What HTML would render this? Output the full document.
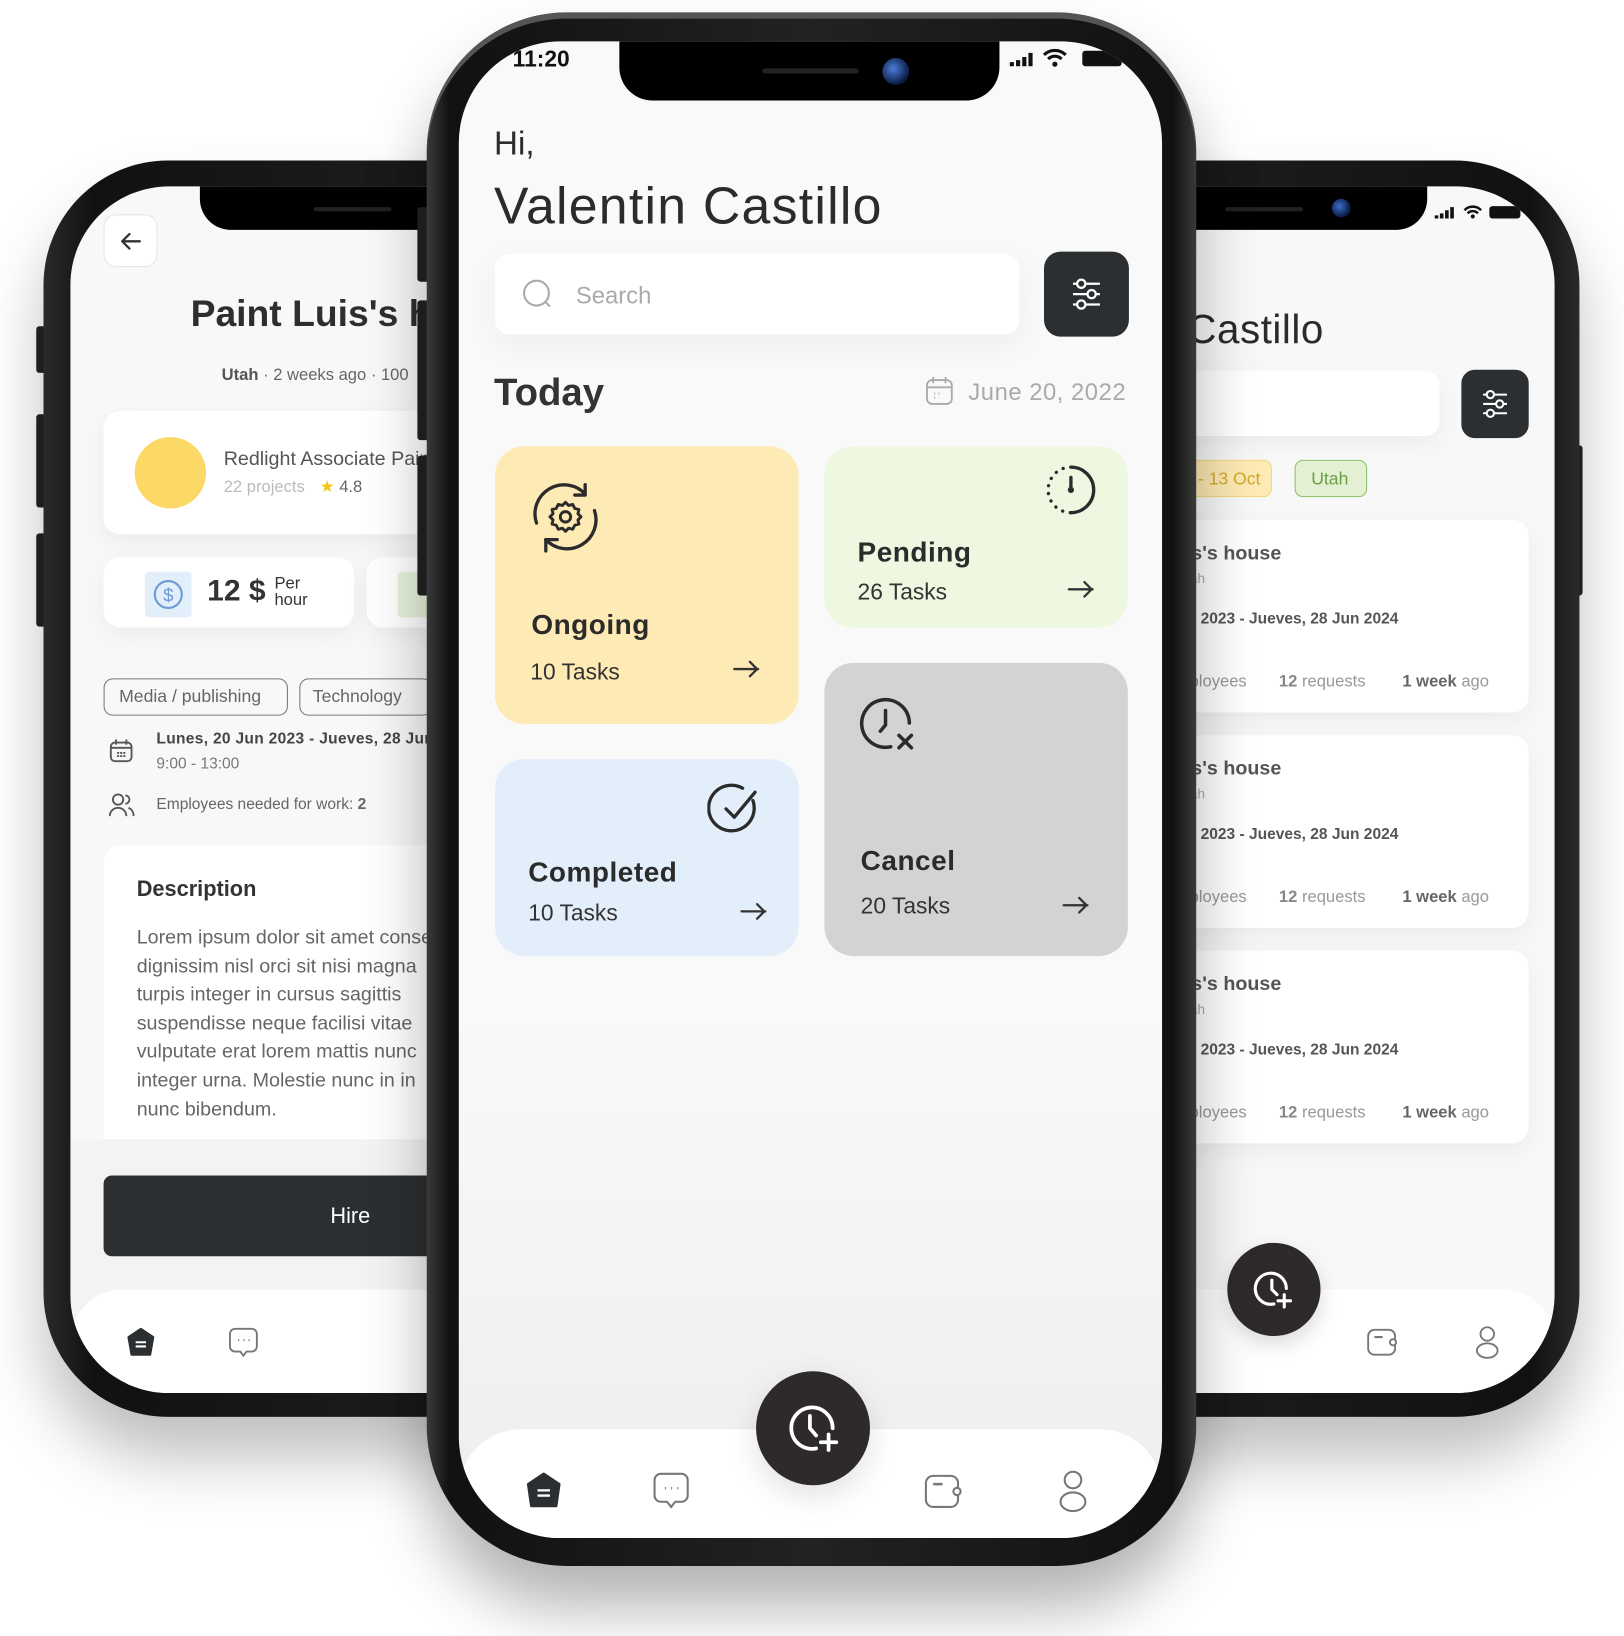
<!DOCTYPE html>
<html><head><meta charset="utf-8">
<style>
*{margin:0;padding:0;box-sizing:border-box}
html,body{width:1624px;height:1636px;overflow:hidden;background:#fff}
body{font-family:"Liberation Sans",sans-serif;color:#2b2b2b}
#w{position:absolute;left:0;top:0;width:1568px;height:1580px;transform:scale(1.0357);transform-origin:0 0}
.a{position:absolute}
.frame{position:absolute;background:linear-gradient(90deg,#2a2a2a,#111 8%,#1a1a1a 50%,#111 92%,#2a2a2a);box-shadow:0 40px 60px rgba(0,0,0,.25)}
.screen{position:absolute;overflow:hidden;background:#f8f8f8}
.t{position:absolute;white-space:nowrap}
.card{position:absolute;background:#fff;border-radius:16px;box-shadow:0 8px 24px rgba(0,0,0,.05)}
.btn{position:absolute;background:#2c2f31;border-radius:16px}
</style></head><body><div id="w">

<!-- LEFT PHONE -->
<div class="a" style="left:35px;top:315px;width:10px;height:45px;background:#222;border-radius:3px"></div>
<div class="a" style="left:35px;top:400px;width:10px;height:90px;background:#222;border-radius:3px"></div>
<div class="a" style="left:35px;top:515px;width:10px;height:90px;background:#222;border-radius:3px"></div>
<div class="frame" style="left:42px;top:155px;width:600px;height:1213px;border-radius:120px"></div>
<div class="screen" style="left:68px;top:180px;width:560px;height:1165px;border-radius:95px">
  <div class="a" style="left:125px;top:0;width:300px;height:42px;background:#000;border-radius:0 0 30px 30px"></div>
  <div class="a" style="left:235px;top:20px;width:75px;height:4px;background:#222;border-radius:2px"></div>
  <div class="card" style="left:32px;top:27px;width:52px;height:51px;border-radius:12px;border:1px solid #e5e5e5;box-shadow:none">
    <svg width="50" height="50" viewBox="0 0 50 50"><path d="M34 25H17M24 18l-7 7 7 7" fill="none" stroke="#333" stroke-width="2.2" stroke-linecap="round" stroke-linejoin="round"/></svg></div>
  <div class="t" style="left:116px;top:102px;font-size:36px;font-weight:bold;color:#2e2e2e">Paint Luis's house</div>
  <div class="t" style="left:146px;top:174px;font-size:16px;color:#666"><b style="color:#555">Utah</b> · 2 weeks ago · 100</div>
  <div class="card" style="left:32px;top:217px;width:520px;height:119px">
    <div class="a" style="left:30px;top:25px;width:69px;height:69px;border-radius:50%;background:#fcd966"></div>
    <div class="t" style="left:116px;top:36px;font-size:19px;color:#555">Redlight Associate Painters</div>
    <div class="t" style="left:116px;top:63px;font-size:16px;color:#bbb">22 projects <span style="color:#f5c518;margin-left:10px">★</span> <span style="color:#666">4.8</span></div>
  </div>
  <div class="card" style="left:32px;top:358px;width:242px;height:68px">
    <div class="a" style="left:40px;top:14px;width:45px;height:44px;background:#e3eefb;border-radius:4px">
      <svg width="45" height="44" viewBox="0 0 45 44"><circle cx="22.5" cy="22" r="13" fill="none" stroke="#6b9bd1" stroke-width="2"/><text x="22.5" y="29" font-size="18" text-anchor="middle" fill="#6b9bd1" font-family="Liberation Sans">$</text></svg></div>
    <div class="t" style="left:100px;top:17px;font-size:29px;font-weight:bold;color:#333">12 $</div>
    <div class="t" style="left:165px;top:18px;font-size:16px;line-height:16px;color:#333">Per<br>hour</div>
  </div>
  <div class="card" style="left:286px;top:358px;width:242px;height:68px">
    <div class="a" style="left:30px;top:14px;width:45px;height:44px;background:#e6f2da;border-radius:4px"></div></div>
  <div class="a" style="left:32px;top:475px;width:178px;height:36px;border:1.5px solid #777;border-radius:9px"></div>
  <div class="t" style="left:47px;top:483px;font-size:17px;color:#666">Media / publishing</div>
  <div class="a" style="left:221px;top:475px;width:128px;height:36px;border:1.5px solid #777;border-radius:9px"></div>
  <div class="t" style="left:234px;top:483px;font-size:17px;color:#666">Technology</div>
  <svg class="a" style="left:36px;top:532px" width="26" height="26" viewBox="0 0 26 26"><rect x="3" y="5" width="20" height="18" rx="4" fill="none" stroke="#555" stroke-width="1.8"/><path d="M8 2v5M18 2v5M3 10h20" stroke="#555" stroke-width="1.8"/><path d="M9 15h2M12 15h2M15 15h2M9 18h2M12 18h2M15 18h2" stroke="#555" stroke-width="1.8"/></svg>
  <div class="t" style="left:83px;top:525px;font-size:15px;font-weight:bold;color:#444;letter-spacing:.3px">Lunes, 20 Jun 2023 - Jueves, 28 Jun 2024</div>
  <div class="t" style="left:83px;top:549px;font-size:15px;color:#777">9:00 - 13:00</div>
  <svg class="a" style="left:36px;top:584px" width="26" height="26" viewBox="0 0 26 26"><circle cx="10" cy="8" r="5" fill="none" stroke="#555" stroke-width="1.8"/><path d="M2 24c0-5 4-8 8-8s8 3 8 8M17 4a4 4 0 0 1 0 8M20 16c3 1 5 4 5 8" fill="none" stroke="#555" stroke-width="1.8"/></svg>
  <div class="t" style="left:83px;top:588px;font-size:15px;color:#666">Employees needed for work: <b>2</b></div>
  <div class="a" style="left:32px;top:636px;width:520px;height:300px;background:#fff;border-radius:16px"></div>
  <div class="t" style="left:64px;top:667px;font-size:21px;font-weight:bold;color:#333">Description</div>
  <div class="t" style="left:64px;top:712px;font-size:19px;line-height:27.6px;color:#666">Lorem ipsum dolor sit amet consectetur<br>dignissim nisl orci sit nisi magna<br>turpis integer in cursus sagittis<br>suspendisse neque facilisi vitae<br>vulputate erat lorem mattis nunc<br>integer urna. Molestie nunc in in<br>nunc bibendum.</div>
  <div class="a" style="left:0;top:920px;width:560px;height:250px;background:#f3f3f3"></div>
  <div class="btn" style="left:32px;top:955px;width:484px;height:78px;border-radius:8px"></div>
  <div class="t" style="left:251px;top:983px;font-size:21px;color:#fff">Hire</div>
  <div class="a" style="left:0;top:1065px;width:560px;height:110px;background:#fff;border-radius:50px 50px 0 0"></div>
  <svg class="a" style="left:52px;top:1100px" width="32" height="32" viewBox="0 0 32 32"><path d="M16 3l12 8-3 17H7L4 11z" fill="#2c2f31" stroke="#2c2f31" stroke-width="2" stroke-linejoin="round"/><path d="M11 16h10M11 20h10" stroke="#fff" stroke-width="2"/></svg>
  <svg class="a" style="left:151px;top:1100px" width="32" height="34" viewBox="0 0 32 34"><path d="M8 3h16a5 5 0 0 1 5 5v12a5 5 0 0 1-5 5h-5l-3 4-3-4H8a5 5 0 0 1-5-5V8a5 5 0 0 1 5-5z" fill="none" stroke="#777" stroke-width="1.8"/><path d="M11 14h1M16 14h1M21 14h1" stroke="#777" stroke-width="2"/></svg>
</div>
<div class="a" style="left:403px;top:200px;width:12px;height:72px;background:#222;border-radius:3px"></div>
<div class="a" style="left:403px;top:290px;width:12px;height:135px;background:#222;border-radius:3px"></div>
<div class="a" style="left:403px;top:440px;width:12px;height:135px;background:#222;border-radius:3px"></div>

<!-- RIGHT PHONE -->
<div class="a" style="left:1518px;top:430px;width:10px;height:145px;background:#222;border-radius:3px"></div>
<div class="frame" style="left:928px;top:155px;width:597px;height:1213px;border-radius:120px"></div>
<div class="screen" style="left:953px;top:180px;width:548px;height:1165px;border-radius:95px">
  <div class="a" style="left:140px;top:0;width:285px;height:42px;background:#000;border-radius:0 0 30px 30px"></div>
  <div class="a" style="left:230px;top:20px;width:75px;height:4px;background:#222;border-radius:2px"></div>
  <div class="a" style="left:333px;top:12px;width:18px;height:18px;border-radius:50%;background:radial-gradient(circle at 40% 40%,#3a6cc8,#0a1a40 70%)"></div>
  <svg class="a" style="left:432px;top:15px" width="95" height="18" viewBox="0 0 95 18"><path d="M2 16v-3M7 16v-5M12 16v-8M17 16v-11" stroke="#111" stroke-width="3.5"/><path d="M29 8a11 11 0 0 1 16 0M32 11a7 7 0 0 1 10 0" fill="none" stroke="#111" stroke-width="2.4"/><circle cx="37" cy="14" r="2" fill="#111"/><rect x="53" y="4" width="30" height="12" rx="3" fill="#111"/></svg>
  <div class="t" style="left:40px;top:117px;font-size:39px;color:#2b2b2b;letter-spacing:.5px">Valentin Castillo</div>
  <div class="card" style="left:32px;top:178px;width:405px;height:63px;border-radius:14px"></div>
  <div class="btn" style="left:458px;top:177px;width:65px;height:66px;border-radius:13px">
    <svg width="65" height="66" viewBox="0 0 65 66"><path d="M21 24h23M21 33h23M21 42h23" stroke="#fff" stroke-width="2"/><circle cx="28" cy="24" r="3.5" fill="#2c2f31" stroke="#fff" stroke-width="2"/><circle cx="37" cy="33" r="3.5" fill="#2c2f31" stroke="#fff" stroke-width="2"/><circle cx="28" cy="42" r="3.5" fill="#2c2f31" stroke="#fff" stroke-width="2"/></svg></div>
  <div class="a" style="left:130px;top:264px;width:145px;height:36px;background:#fdeab4;border:1.5px solid #f2d57a;border-radius:8px"></div>
  <div class="t" style="left:150px;top:273px;font-size:17px;color:#d0a92a;width:114px;text-align:right">11 - 13 Oct</div>
  <div class="a" style="left:297px;top:264px;width:70px;height:36px;background:#e3f0d4;border:1.5px solid #8cc063;border-radius:8px"></div>
  <div class="t" style="left:313px;top:273px;font-size:17px;color:#6a9f43">Utah</div>
  <div class="card" style="left:32px;top:322px;width:491px;height:186px"></div>
  <div class="card" style="left:32px;top:530px;width:491px;height:186px"></div>
  <div class="card" style="left:32px;top:738px;width:491px;height:186px"></div>
  <div class="t" style="left:117px;top:344px;font-size:19px;font-weight:bold;color:#555">Paint Luis's house</div>
  <div class="t" style="left:183px;top:371px;font-size:13px;color:#aaa">Utah</div>
  <div class="t" style="left:102px;top:409px;font-size:15px;font-weight:bold;color:#555">Lunes, 20 Jun 2023 - Jueves, 28 Jun 2024</div>
  <div class="t" style="left:160px;top:470px;font-size:16px;color:#999">2 employees &nbsp;&nbsp;&nbsp;&nbsp;&nbsp;&nbsp;<b style="color:#888">12</b> requests &nbsp;&nbsp;&nbsp;&nbsp;&nbsp;&nbsp;&nbsp;<b style="color:#666">1 week</b> ago</div>
  <div class="t" style="left:117px;top:552px;font-size:19px;font-weight:bold;color:#555">Paint Luis's house</div>
  <div class="t" style="left:183px;top:579px;font-size:13px;color:#aaa">Utah</div>
  <div class="t" style="left:102px;top:617px;font-size:15px;font-weight:bold;color:#555">Lunes, 20 Jun 2023 - Jueves, 28 Jun 2024</div>
  <div class="t" style="left:160px;top:678px;font-size:16px;color:#999">2 employees &nbsp;&nbsp;&nbsp;&nbsp;&nbsp;&nbsp;<b style="color:#888">12</b> requests &nbsp;&nbsp;&nbsp;&nbsp;&nbsp;&nbsp;&nbsp;<b style="color:#666">1 week</b> ago</div>
  <div class="t" style="left:117px;top:760px;font-size:19px;font-weight:bold;color:#555">Paint Luis's house</div>
  <div class="t" style="left:183px;top:787px;font-size:13px;color:#aaa">Utah</div>
  <div class="t" style="left:102px;top:825px;font-size:15px;font-weight:bold;color:#555">Lunes, 20 Jun 2023 - Jueves, 28 Jun 2024</div>
  <div class="t" style="left:160px;top:886px;font-size:16px;color:#999">2 employees &nbsp;&nbsp;&nbsp;&nbsp;&nbsp;&nbsp;<b style="color:#888">12</b> requests &nbsp;&nbsp;&nbsp;&nbsp;&nbsp;&nbsp;&nbsp;<b style="color:#666">1 week</b> ago</div>
  <div class="a" style="left:0;top:1065px;width:548px;height:110px;background:#fff;border-radius:50px 50px 0 0"></div>
  <div class="a" style="left:232px;top:1020px;width:90px;height:90px;border-radius:50%;background:#2e2a2a;box-shadow:0 8px 20px rgba(0,0,0,.15)">
    <svg width="90" height="90" viewBox="0 0 90 90"><path d="M57 44a15 15 0 1 0-12 15" fill="none" stroke="#fff" stroke-width="3" stroke-linecap="round"/><path d="M43 36v9l5 5" fill="none" stroke="#fff" stroke-width="3" stroke-linecap="round"/><path d="M55 50v12M49 56h12" stroke="#fff" stroke-width="3" stroke-linecap="round"/></svg></div>
  <svg class="a" style="left:365px;top:1100px" width="34" height="32" viewBox="0 0 34 32"><rect x="3" y="4" width="26" height="24" rx="6" fill="none" stroke="#777" stroke-width="1.8"/><path d="M9 11h8" stroke="#777" stroke-width="2"/><circle cx="27" cy="16" r="3" fill="#fff" stroke="#777" stroke-width="1.8"/></svg>
  <svg class="a" style="left:468px;top:1098px" width="30" height="36" viewBox="0 0 30 36"><circle cx="15" cy="10" r="6.5" fill="none" stroke="#777" stroke-width="1.8"/><ellipse cx="15" cy="26" rx="10" ry="7" fill="none" stroke="#777" stroke-width="1.8"/></svg>
</div>

<!-- CENTER PHONE -->
<div class="frame" style="left:412px;top:12px;width:743px;height:1500px;border-radius:135px;background:linear-gradient(90deg,#3a3a3a,#111 3%,#222 50%,#111 97%,#3a3a3a);box-shadow:0 40px 60px rgba(0,0,0,.3), inset 0 6px 0 #555"></div>
<div class="screen" style="left:443px;top:40px;width:679px;height:1445px;border-radius:98px;background:linear-gradient(#f9f9f9,#f9f9f9 65%,#efefef 95%)">
  <div class="a" style="left:155px;top:0;width:367px;height:57px;background:#000;border-radius:0 0 32px 32px"></div>
  <div class="a" style="left:293px;top:26px;width:93px;height:5px;background:#222;border-radius:3px"></div>
  <div class="a" style="left:409px;top:16px;width:26px;height:26px;border-radius:50%;background:radial-gradient(circle at 40% 40%,#4a7ed8,#0a1a40 70%)"></div>
  <div class="t" style="left:52px;top:4px;font-size:22px;font-weight:bold;color:#111">11:20</div>
  <svg class="a" style="left:530px;top:4px" width="125" height="22" viewBox="0 0 125 22"><path d="M4 20v-4M10 20v-6M16 20v-9M22 20v-13" stroke="#111" stroke-width="4"/><path d="M35 9a15 15 0 0 1 21 0M39 13a9 9 0 0 1 13 0" fill="none" stroke="#111" stroke-width="3"/><circle cx="45.5" cy="18" r="2.5" fill="#111"/><rect x="72" y="5" width="38" height="15" rx="3" fill="#111"/></svg>
  <div class="t" style="left:34px;top:80px;font-size:32px;color:#2b2b2b">Hi,</div>
  <div class="t" style="left:34px;top:130px;font-size:50px;color:#2b2b2b;letter-spacing:1.2px">Valentin Castillo</div>
  <div class="card" style="left:35px;top:205px;width:506px;height:78px;border-radius:14px;box-shadow:0 10px 30px rgba(0,0,0,.05)">
    <svg class="a" style="left:24px;top:22px" width="36" height="36" viewBox="0 0 36 36"><circle cx="16" cy="16" r="12" fill="none" stroke="#aaa" stroke-width="2"/><path d="M25 25l4 4" stroke="#aaa" stroke-width="2"/></svg>
    <div class="t" style="left:78px;top:27px;font-size:23px;color:#aaa">Search</div>
  </div>
  <div class="btn" style="left:565px;top:203px;width:82px;height:82px">
    <svg width="82" height="82" viewBox="0 0 82 82"><path d="M28 31h26M28 41h26M28 51h26" stroke="#fff" stroke-width="2.2"/><circle cx="36" cy="31" r="4" fill="#2c2f31" stroke="#fff" stroke-width="2.2"/><circle cx="46" cy="41" r="4" fill="#2c2f31" stroke="#fff" stroke-width="2.2"/><circle cx="36" cy="51" r="4" fill="#2c2f31" stroke="#fff" stroke-width="2.2"/></svg></div>
  <div class="t" style="left:34px;top:318px;font-size:37px;font-weight:bold;color:#333">Today</div>
  <svg class="a" style="left:450px;top:322px" width="28" height="30" viewBox="0 0 28 30"><rect x="2" y="5" width="24" height="23" rx="5" fill="none" stroke="#aaa" stroke-width="1.8"/><path d="M8 2v6M20 2v6M2 12h24" stroke="#aaa" stroke-width="1.8"/><path d="M9 18h1M9 22h1M13 18h1" stroke="#aaa" stroke-width="2"/></svg>
  <div class="t" style="left:492px;top:325px;font-size:23px;color:#aaa;letter-spacing:.5px">June 20, 2022</div>

  <div class="a" style="left:35px;top:391px;width:293px;height:268px;background:#fdeab4;border-radius:28px">
    <svg class="a" style="left:30px;top:30px" width="76" height="76" viewBox="0 0 76 76"><path d="M10 44a28 28 0 0 1 47-28M66 32a28 28 0 0 1-47 28" fill="none" stroke="#2b2b2b" stroke-width="3.2" stroke-linecap="round"/><path d="M57 7v10H47M19 71V60h11" fill="none" stroke="#2b2b2b" stroke-width="3.2" stroke-linecap="round" stroke-linejoin="round"/><path d="M38 24l3 3 4-1 2 4 4 1-1 4 3 3-3 3 1 4-4 1-2 4-4-1-3 3-3-3-4 1-2-4-4-1 1-4-3-3 3-3-1-4 4-1 2-4 4 1z" fill="none" stroke="#2b2b2b" stroke-width="2.8" stroke-linejoin="round"/><circle cx="38" cy="38" r="5" fill="none" stroke="#2b2b2b" stroke-width="2.8"/></svg>
    <div class="t" style="left:35px;top:157px;font-size:27px;font-weight:bold;color:#2b2b2b;letter-spacing:.5px">Ongoing</div>
    <div class="t" style="left:34px;top:205px;font-size:22px;color:#333">10 Tasks</div>
    <svg class="a" style="left:228px;top:205px" width="30" height="20" viewBox="0 0 30 20"><path d="M3 10h23M18 3l7 7-7 7" fill="none" stroke="#333" stroke-width="2.2" stroke-linecap="round" stroke-linejoin="round"/></svg>
  </div>
  <div class="a" style="left:353px;top:391px;width:293px;height:175px;background:#eef7e0;border-radius:28px">
    <svg class="a" style="left:208px;top:12px" width="60" height="60" viewBox="0 0 60 60"><path d="M30 8a22 22 0 0 1 0 44" fill="none" stroke="#2b2b2b" stroke-width="3.2" stroke-linecap="round"/><path d="M30 8a22 22 0 0 0 0 44" fill="none" stroke="#2b2b2b" stroke-width="3.2" stroke-linecap="round" stroke-dasharray="0.1 7.5"/><path d="M30 18v12" stroke="#2b2b2b" stroke-width="3.2" stroke-linecap="round"/><circle cx="30" cy="30" r="3" fill="#2b2b2b"/></svg>
    <div class="t" style="left:32px;top:87px;font-size:27px;font-weight:bold;color:#2b2b2b;letter-spacing:.5px">Pending</div>
    <div class="t" style="left:32px;top:128px;font-size:22px;color:#333">26 Tasks</div>
    <svg class="a" style="left:233px;top:128px" width="30" height="20" viewBox="0 0 30 20"><path d="M3 10h23M18 3l7 7-7 7" fill="none" stroke="#333" stroke-width="2.2" stroke-linecap="round" stroke-linejoin="round"/></svg>
  </div>
  <div class="a" style="left:35px;top:693px;width:293px;height:190px;background:#e3eefb;border-radius:28px">
    <svg class="a" style="left:205px;top:22px" width="56" height="56" viewBox="0 0 56 56"><path d="M44 18a22 22 0 1 1-10-12" fill="none" stroke="#2b2b2b" stroke-width="3.2" stroke-linecap="round"/><path d="M18 26l8 8 20-24" fill="none" stroke="#2b2b2b" stroke-width="3.2" stroke-linecap="round" stroke-linejoin="round"/></svg>
    <div class="t" style="left:32px;top:94px;font-size:27px;font-weight:bold;color:#2b2b2b;letter-spacing:.5px">Completed</div>
    <div class="t" style="left:32px;top:136px;font-size:22px;color:#333">10 Tasks</div>
    <svg class="a" style="left:235px;top:137px" width="30" height="20" viewBox="0 0 30 20"><path d="M3 10h23M18 3l7 7-7 7" fill="none" stroke="#333" stroke-width="2.2" stroke-linecap="round" stroke-linejoin="round"/></svg>
  </div>
  <div class="a" style="left:353px;top:600px;width:293px;height:283px;background:#d2d3d3;border-radius:28px">
    <svg class="a" style="left:32px;top:28px" width="62" height="62" viewBox="0 0 62 62"><path d="M50 30a23 23 0 1 0-18 23" fill="none" stroke="#2b2b2b" stroke-width="3.4" stroke-linecap="round"/><path d="M27 18v14l-5 6" fill="none" stroke="#2b2b2b" stroke-width="3.4" stroke-linecap="round"/><path d="M40 42l12 12M52 42L40 54" stroke="#2b2b2b" stroke-width="3.4" stroke-linecap="round"/></svg>
    <div class="t" style="left:35px;top:176px;font-size:27px;font-weight:bold;color:#2b2b2b;letter-spacing:.5px">Cancel</div>
    <div class="t" style="left:35px;top:222px;font-size:22px;color:#333">20 Tasks</div>
    <svg class="a" style="left:228px;top:224px" width="30" height="20" viewBox="0 0 30 20"><path d="M3 10h23M18 3l7 7-7 7" fill="none" stroke="#333" stroke-width="2.2" stroke-linecap="round" stroke-linejoin="round"/></svg>
  </div>

  <div class="a" style="left:0;top:1340px;width:679px;height:110px;background:#fff;border-radius:60px 60px 0 0"></div>
  <div class="a" style="left:287px;top:1284px;width:110px;height:110px;border-radius:50%;background:#2e2a2a;box-shadow:0 10px 30px rgba(0,0,0,.12)">
    <svg width="110" height="110" viewBox="0 0 110 110"><path d="M74 55a20 20 0 1 0-16 19.5" fill="none" stroke="#fff" stroke-width="3.6" stroke-linecap="round"/><path d="M52 43v12l6 7" fill="none" stroke="#fff" stroke-width="3.6" stroke-linecap="round"/><path d="M70 61v15M62.5 68.5h15" stroke="#fff" stroke-width="3.6" stroke-linecap="round"/></svg></div>
  <svg class="a" style="left:63px;top:1380px" width="38" height="38" viewBox="0 0 38 38"><path d="M19 3l15 10-3 21H7L4 13z" fill="#2c2f31" stroke="#2c2f31" stroke-width="2.5" stroke-linejoin="round"/><path d="M13 19h12M13 24h12" stroke="#fff" stroke-width="2.2"/></svg>
  <svg class="a" style="left:186px;top:1380px" width="38" height="40" viewBox="0 0 38 40"><path d="M9 3h20a6 6 0 0 1 6 6v15a6 6 0 0 1-6 6h-6l-4 5-4-5H9a6 6 0 0 1-6-6V9a6 6 0 0 1 6-6z" fill="none" stroke="#777" stroke-width="2"/><path d="M13 17h1M19 17h1M25 17h1" stroke="#777" stroke-width="2.4"/></svg>
  <svg class="a" style="left:448px;top:1382px" width="40" height="36" viewBox="0 0 40 36"><rect x="3" y="3" width="31" height="30" rx="7" fill="none" stroke="#777" stroke-width="2"/><path d="M10 11h9" stroke="#777" stroke-width="2.4"/><circle cx="33" cy="18" r="3.5" fill="#fff" stroke="#777" stroke-width="2"/></svg>
  <svg class="a" style="left:576px;top:1378px" width="34" height="44" viewBox="0 0 34 44"><circle cx="17" cy="11" r="8" fill="none" stroke="#777" stroke-width="2"/><ellipse cx="17" cy="32" rx="12" ry="9" fill="none" stroke="#777" stroke-width="2"/></svg>
</div>

</div></body></html>
